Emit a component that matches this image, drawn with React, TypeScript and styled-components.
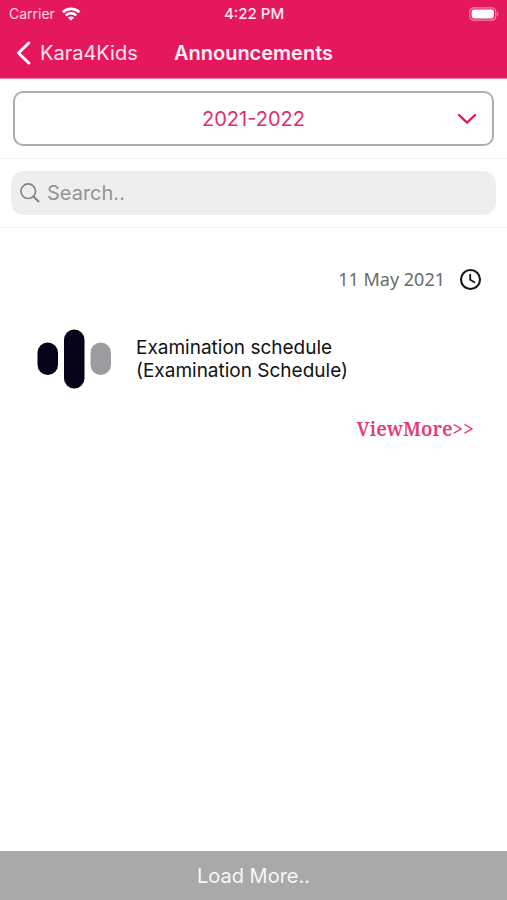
import React from "react";
import styled, { createGlobalStyle } from "styled-components";

const PINK = "#e6185d";

const GlobalStyle = createGlobalStyle`
  *, *::before, *::after { box-sizing: border-box; }
  body {
    margin: 0;
    background: #ffffff;
    color: #111111;
    font-family: Inter, "Liberation Sans", sans-serif;
  }
  h1, h2, p { margin: 0; font-weight: 400; }
  button, input, select { font: inherit; }
`;

const Screen = styled.div`
  display: flex;
  flex-direction: column;
  min-height: 100vh;
`;

const Header = styled.header`
  background: ${PINK};
  color: #ffffff;
  border-bottom: 1px solid #f27ba4;
`;

const StatusBar = styled.div`
  display: grid;
  grid-template-columns: 1fr auto 1fr;
  align-items: center;
  height: 27px;
  padding: 0 8px 0 9px;
  font-size: 14px;
  line-height: 16px;
`;

const Carrier = styled.span`
  display: flex;
  align-items: center;
  gap: 6px;
  color: #ffd9e8;
`;

const Time = styled.time`
  font-size: 15px;
  font-weight: 500;
  color: #ffe9f1;
`;

const Battery = styled.span`
  display: flex;
  justify-content: flex-end;
`;

const NavBar = styled.nav`
  display: grid;
  grid-template-columns: 1fr auto 1fr;
  align-items: center;
  height: 51px;
  padding: 0 16px;
  font-size: 20px;
  line-height: 24px;
`;

const BackLink = styled.a`
  display: flex;
  align-items: center;
  gap: 9px;
  color: #ffe3ed;
  text-decoration: none;
`;

const Title = styled.h1`
  font-size: 20px;
  font-weight: 600;
  color: #fff0f5;
`;

const Section = styled.div<{ $inset: number }>`
  padding: 12px ${(p) => p.$inset}px;
  border-bottom: 1px solid #f0f0f0;
`;

const YearPicker = styled.label`
  display: grid;
  align-items: center;
  color: ${PINK};

  > * { grid-area: 1 / 1; }
  > svg { justify-self: end; margin-right: 17px; pointer-events: none; }
`;

const YearSelect = styled.select`
  appearance: none;
  width: 100%;
  height: 55px;
  padding: 0;
  border: 2px solid #adadad;
  border-radius: 10px;
  background: #ffffff;
  color: #dd2f6a;
  font-size: 20px;
  text-align: center;
  text-align-last: center;
`;

const SearchField = styled.label`
  display: flex;
  align-items: center;
  gap: 6px;
  height: 44px;
  padding: 0 8px;
  border-radius: 13px;
  background: #eeeeee;
`;

const SearchInput = styled.input`
  flex: 1;
  min-width: 0;
  padding: 0;
  border: 0;
  outline: 0;
  background: transparent;
  color: #333333;
  font-size: 20px;

  &::placeholder { color: #939396; opacity: 1; }
`;

const List = styled.main`
  flex: 1;
  padding: 39px 25px;
`;

const Card = styled.article`
  display: flex;
  flex-direction: column;
`;

const DateRow = styled.div`
  display: flex;
  justify-content: flex-end;
  align-items: center;
  gap: 14px;
  height: 24px;
  color: #6b6b6b;
  font-family: "Noto Sans", sans-serif;
  font-size: 18px;
`;

const CardBody = styled.div`
  display: flex;
  align-items: center;
  gap: 24px;
  margin-top: 38px;
  padding-left: 12px;
`;

const CardTitle = styled.h2`
  font-size: 19px;
  line-height: 23px;
`;

const ViewMore = styled.a`
  align-self: flex-end;
  margin: 27px 8px 0 0;
  color: #e33c74;
  font-family: "Noto Serif", "DejaVu Serif", serif;
  font-size: 19px;
  font-weight: 600;
  line-height: 26px;
  text-decoration: none;
`;

const LoadMore = styled.button`
  width: 100%;
  height: 49px;
  padding: 0;
  border: 0;
  background: #a9a9a9;
  color: #f7f7f7;
  font-size: 20px;
`;

const WifiIcon = () => (
  <svg width="20" height="14" viewBox="0 0 20 14" fill="none" stroke="#fff" strokeWidth="2.6" aria-hidden="true">
    <path d="M1.7 5.2C6.4.7 13.6.7 18.3 5.2" />
    <path d="M4.8 8.4c3-2.8 7.4-2.8 10.4 0" />
    <path d="M10 13.7 6.9 10.5c1.8-1.5 4.4-1.5 6.2 0z" fill="#fff" stroke="none" />
  </svg>
);

const BatteryIcon = () => (
  <svg width="30" height="14" viewBox="0 0 30 14" aria-hidden="true">
    <rect x=".8" y=".8" width="26" height="12.4" rx="4" fill="none" stroke="#f389ae" strokeWidth="1.2" />
    <rect x="2.6" y="2.6" width="22.4" height="8.8" rx="2.4" fill="#fff" />
    <path d="M28.2 5c1.7.6 1.7 3.4 0 4z" fill="#f389ae" />
  </svg>
);

const BackIcon = () => (
  <svg width="15" height="24" viewBox="0 0 15 24" fill="none" stroke="#fff" strokeWidth="3" strokeLinecap="round" strokeLinejoin="round" aria-hidden="true">
    <path d="M12.8 2 2.5 12l10.3 10" />
  </svg>
);

const ChevronIcon = () => (
  <svg width="20" height="12" viewBox="0 0 20 12" fill="none" stroke="currentColor" strokeWidth="2.4" strokeLinecap="round" strokeLinejoin="round" aria-hidden="true">
    <path d="m2 2 8 7.6L18 2" />
  </svg>
);

const SearchIcon = () => (
  <svg width="22" height="22" viewBox="0 0 22 22" fill="none" stroke="#858588" strokeWidth="1.7" strokeLinecap="round" aria-hidden="true">
    <circle cx="9.2" cy="9.2" r="7.3" />
    <path d="m14.6 14.6 4.9 4.9" strokeWidth="2.1" />
  </svg>
);

const ClockIcon = () => (
  <svg width="23" height="23" viewBox="0 0 23 23" fill="none" stroke="#161616" strokeLinecap="round" strokeLinejoin="round" aria-hidden="true">
    <circle cx="11.5" cy="11.5" r="9.5" strokeWidth="2.1" />
    <path d="M11.2 6.6v5.2l4.2 2.4" strokeWidth="1.8" />
  </svg>
);

const BarsLogo = () => (
  <svg width="75" height="60" viewBox="0 0 75 60" aria-hidden="true">
    <rect x=".5" y="13.5" width="20.5" height="32.5" rx="10.2" fill="#05031a" />
    <rect x="27" y=".5" width="20.5" height="59" rx="10.2" fill="#05031a" />
    <rect x="53.5" y="13.5" width="20.5" height="32.5" rx="10.2" fill="#9d9b9f" />
  </svg>
);

export default function App() {
  return (
    <Screen>
      <GlobalStyle />
      <Header>
        <StatusBar>
          <Carrier>Carrier <WifiIcon /></Carrier>
          <Time>4:22 PM</Time>
          <Battery><BatteryIcon /></Battery>
        </StatusBar>
        <NavBar aria-label="Main">
          <BackLink href="#home"><BackIcon />Kara4Kids</BackLink>
          <Title>Announcements</Title>
        </NavBar>
      </Header>
      <Section $inset={13}>
        <YearPicker>
          <YearSelect aria-label="Academic year" defaultValue="2021-2022">
            <option>2021-2022</option>
          </YearSelect>
          <ChevronIcon />
        </YearPicker>
      </Section>
      <Section $inset={11}>
        <SearchField>
          <SearchIcon />
          <SearchInput type="search" aria-label="Search" placeholder="Search.." />
        </SearchField>
      </Section>
      <List>
        <Card>
          <DateRow><time dateTime="2021-05-11">11 May 2021</time><ClockIcon /></DateRow>
          <CardBody>
            <BarsLogo />
            <CardTitle>Examination schedule<br />(Examination Schedule)</CardTitle>
          </CardBody>
          <ViewMore href="#details">ViewMore&gt;&gt;</ViewMore>
        </Card>
      </List>
      <LoadMore type="button">Load More..</LoadMore>
    </Screen>
  );
}
